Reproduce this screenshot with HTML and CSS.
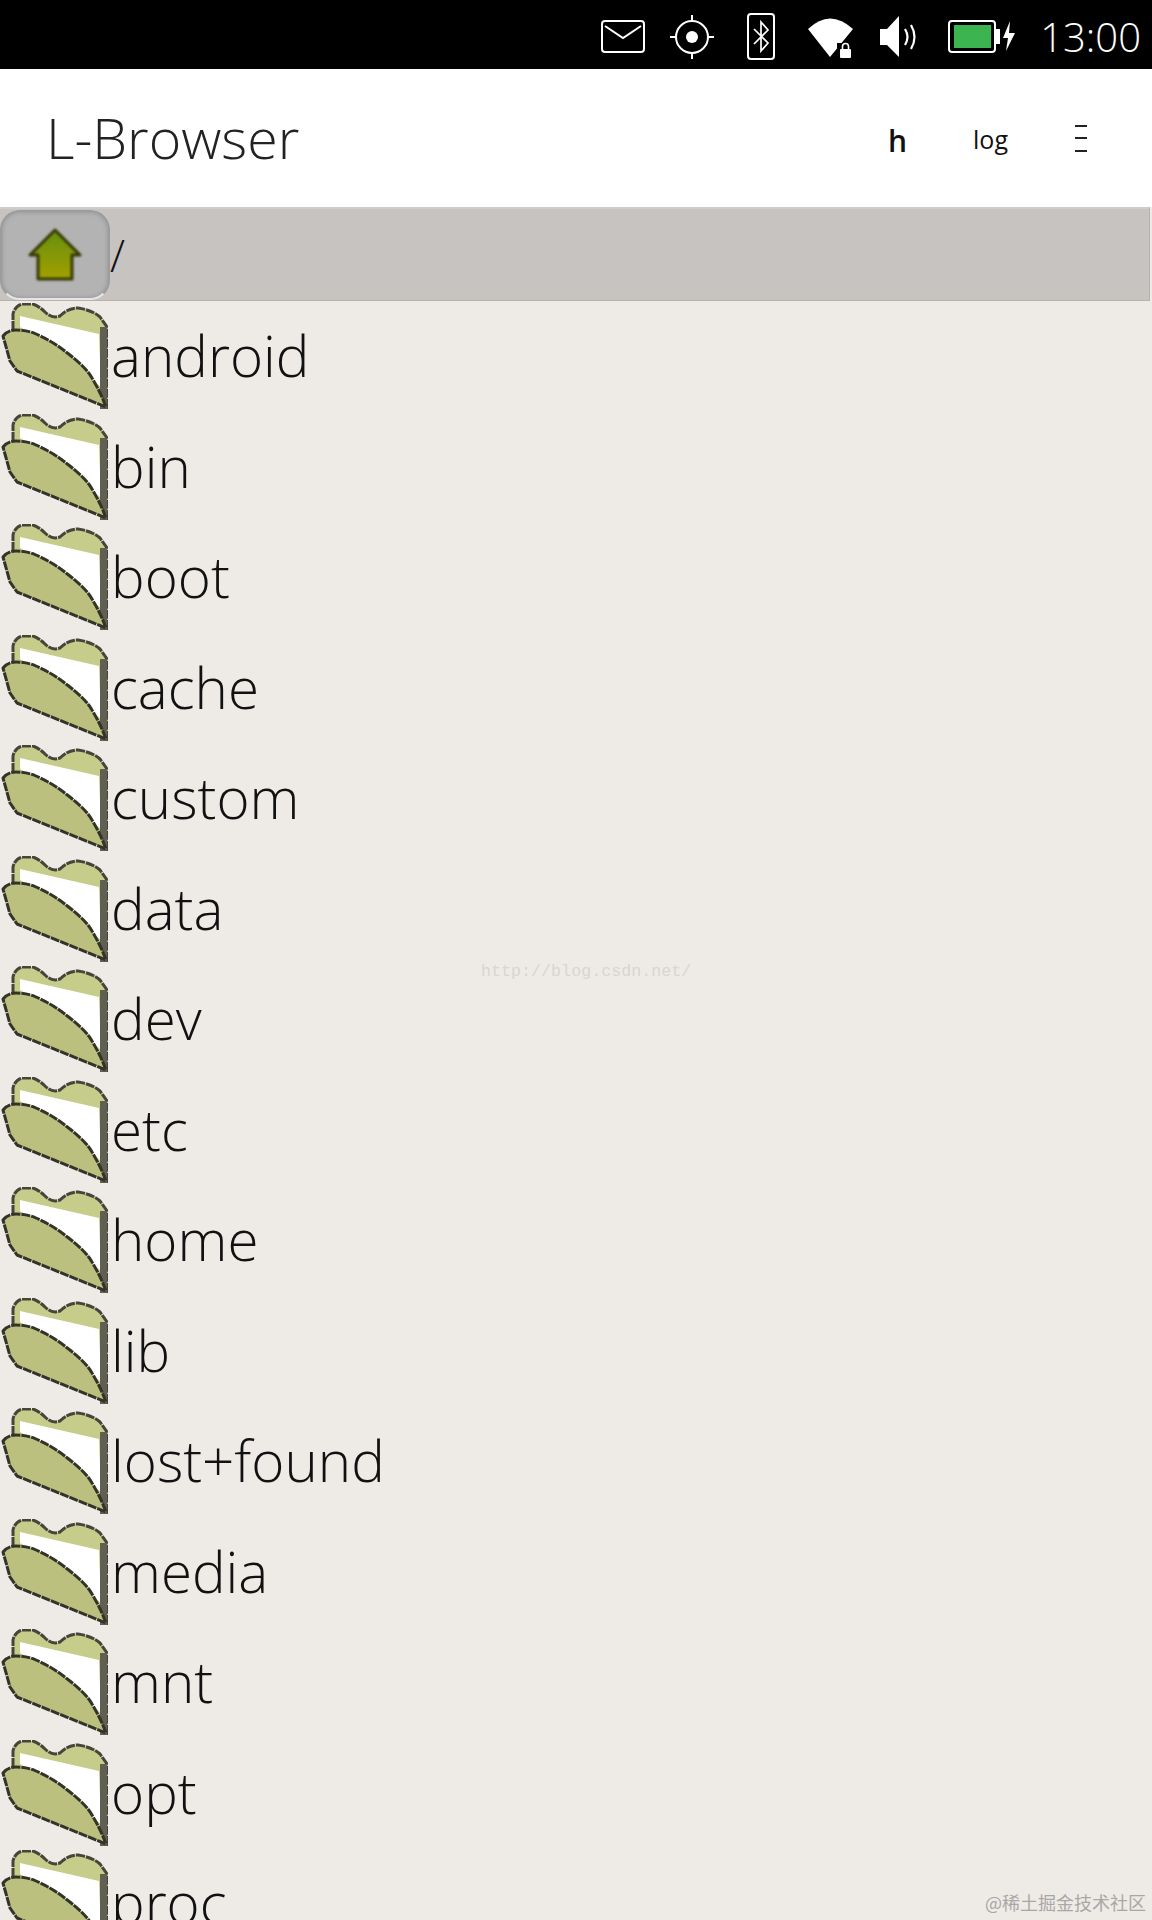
FILE: index.html
```html
<!DOCTYPE html>
<html lang="en">
<head>
<meta charset="utf-8">
<title>L-Browser</title>
<link rel="stylesheet" href="styles.css">
</head>
<body>
<svg class="defs" width="0" height="0" aria-hidden="true">
  <defs>
    <symbol id="folder" viewBox="0 0 108 106">
      <path d="M13 27 L13 11 Q15 3 22 1 L33 1 Q39 3 45 9 Q52 16 60 13 Q68 5 78 5 Q92 7 100 14 L107 24 L107 104 L60 60 L13 27Z" fill="#c6cc8a" stroke="#45453a" stroke-width="3" stroke-dasharray="9 1"/>
      <path d="M20 13 L99 31 L101 84 L60 50 L20 24Z" fill="#fff"/>
      <rect x="100" y="24" width="7" height="82" fill="#5f6052"/>
      <path d="M3 33 Q8 27 16 27 Q27 27 36 31 Q54 39 66 49 Q86 64 92 75 Q101 90 106 104 L17 68 L10 58Z" fill="#bcc07f" stroke="#33332a" stroke-width="3" stroke-dasharray="9 1" stroke-linejoin="round"/>
    </symbol>
    <linearGradient id="arrowfill" x1="0" y1="0" x2="0" y2="1">
      <stop offset="0" stop-color="#668f0e"/>
      <stop offset="1" stop-color="#a3a000"/>
    </linearGradient>
  </defs>
</svg>

<header class="status">
  <svg class="ic ic-mail" width="44" height="33" viewBox="0 0 44 33"><rect x="1" y="1" width="42" height="31" rx="3" fill="none" stroke="#fff" stroke-width="2"/><path d="M4 6 L22 18 L40 6" fill="none" stroke="#fff" stroke-width="2"/></svg>
  <svg class="ic ic-target" width="44" height="44" viewBox="0 0 44 44"><circle cx="22" cy="22" r="16" fill="none" stroke="#fff" stroke-width="2"/><circle cx="22" cy="22" r="6" fill="#fff"/><path d="M22 0V6M22 38V44M0 22H6M38 22H44" stroke="#fff" stroke-width="2"/></svg>
  <svg class="ic ic-bt" width="28" height="47" viewBox="0 0 28 47"><rect x="1" y="1" width="26" height="45" rx="3" fill="none" stroke="#fff" stroke-width="2"/><path d="M7 16 L21 30 L14 38 V9 L21 17 L7 31" fill="none" stroke="#fff" stroke-width="1.7"/></svg>
  <svg class="ic ic-wifi" width="45" height="42" viewBox="0 0 45 42"><path d="M0 13 Q22 -8 45 13 L22 41Z" fill="#fff"/><rect x="29" y="27" width="16" height="15" fill="#000"/><rect x="32" y="33" width="11" height="9" rx="1" fill="#fff"/><path d="M34.5 33V30.500a3 3 0 0 1 6 0V33" fill="none" stroke="#fff" stroke-width="1.600"/></svg>
  <svg class="ic ic-sound" width="39" height="42" viewBox="0 0 39 42"><path d="M0 13 H7 L19 0 V41 L7 29 H0Z" fill="#fff"/><path d="M25 13 Q30 21 25 29M31 9 Q38 21 31 33" fill="none" stroke="#fff" stroke-width="2.200"/></svg>
  <svg class="ic ic-battery" width="67" height="33" viewBox="0 0 67 33"><rect x="1" y="1" width="46" height="31" rx="3" fill="none" stroke="#fff" stroke-width="2"/><rect x="6" y="5" width="37" height="23" fill="#3cb44f"/><rect x="48" y="9" width="4" height="15" fill="#fff"/><path d="M62 1 L55 18 H60 L58 31 L67 13 H61 Z" fill="#fff"/></svg>
  <span class="clock">13:00</span>
</header>

<nav class="appbar">
  <h1 class="title">L-Browser</h1>
  <div class="actions">
    <span class="action action-h">h</span>
    <span class="action action-log">log</span>
    <span class="overflow"><i></i><i></i><i></i></span>
  </div>
</nav>

<section class="pathbar">
  <button class="upbtn" type="button" aria-label="Up">
    <svg class="uparrow" width="54" height="54" viewBox="0 0 54 54"><path d="M27 2 L52 27 H44 V51 H10 V27 H2Z" fill="url(#arrowfill)" stroke="#353a04" stroke-width="3" stroke-linejoin="round"/></svg>
  </button>
  <span class="path">/</span>
</section>

<ul class="list">
  <li class="row"><svg class="folder"><use href="#folder"/></svg><span class="name">android</span></li>
  <li class="row"><svg class="folder"><use href="#folder"/></svg><span class="name">bin</span></li>
  <li class="row"><svg class="folder"><use href="#folder"/></svg><span class="name">boot</span></li>
  <li class="row"><svg class="folder"><use href="#folder"/></svg><span class="name">cache</span></li>
  <li class="row"><svg class="folder"><use href="#folder"/></svg><span class="name">custom</span></li>
  <li class="row"><svg class="folder"><use href="#folder"/></svg><span class="name">data</span></li>
  <li class="row"><svg class="folder"><use href="#folder"/></svg><span class="name">dev</span></li>
  <li class="row"><svg class="folder"><use href="#folder"/></svg><span class="name">etc</span></li>
  <li class="row"><svg class="folder"><use href="#folder"/></svg><span class="name">home</span></li>
  <li class="row"><svg class="folder"><use href="#folder"/></svg><span class="name">lib</span></li>
  <li class="row"><svg class="folder"><use href="#folder"/></svg><span class="name">lost+found</span></li>
  <li class="row"><svg class="folder"><use href="#folder"/></svg><span class="name">media</span></li>
  <li class="row"><svg class="folder"><use href="#folder"/></svg><span class="name">mnt</span></li>
  <li class="row"><svg class="folder"><use href="#folder"/></svg><span class="name">opt</span></li>
  <li class="row"><svg class="folder"><use href="#folder"/></svg><span class="name">proc</span></li>
</ul>

<div class="mark-csdn">http://blog.csdn.net/</div>
<div class="mark-juejin">@稀土掘金技术社区</div>
</body>
</html>
```

FILE: styles.css
```css
* { box-sizing: border-box; }
html, body { margin: 0; padding: 0; }
body {
  position: relative;
  width: 1152px;
  height: 1920px;
  overflow: hidden;
  background: #eeebe7;
  font-family: "Open Sans", "Noto Sans", sans-serif;
  color: #111;
}
.defs { position: absolute; }

.status {
  height: 69px;
  background: #000;
  display: flex;
  align-items: center;
  justify-content: flex-end;
  padding-right: 11px;
  padding-top: 4px;
}
.ic { flex: none; display: block; }
.ic-target { margin-left: 25px; }
.ic-bt { margin-left: 33px; }
.ic-wifi { margin-left: 33px; }
.ic-sound { margin-left: 27px; }
.ic-battery { margin-left: 29px; }
.clock {
  margin-left: 25px;
  color: #fff;
  font-size: 40px;
  font-weight: 300;
  line-height: 60px;
}

.appbar {
  height: 138px;
  background: #fff;
  display: flex;
  align-items: center;
  justify-content: space-between;
  padding-left: 46px;
}
.title {
  margin: 0;
  font-size: 55.500px;
  font-weight: 300;
  line-height: 70px;
  color: #222;
}
.actions { display: flex; align-items: center; }
.action { font-size: 25px; font-weight: 500; color: #111; line-height: 40px; margin-top: 2px; }
.action-h { font-size: 30px; font-weight: 600; margin-top: 5px; }
.action-log { margin-left: 66px; }
.overflow {
  margin: 0 65px 0 67px;
  display: flex;
  flex-direction: column;
  gap: 10.500px;
}
.overflow i { display: block; width: 12px; height: 2px; background: #222; }

.pathbar {
  height: 94px;
  margin-right: 2px;
  background: #c7c3c0;
  border-top: 2px solid #cfcdca;
  border-bottom: 1px solid #b4b1ae;
  border-right: 1px solid #b4b1ae;
  display: flex;
  align-items: center;
}
.upbtn {
  width: 110px;
  height: 90px;
  padding: 0;
  flex: none;
  display: flex;
  align-items: center;
  justify-content: center;
  background: #b4b3b3;
  border: 2px solid #9c9c9c;
  border-bottom-color: #e6e6e6;
  border-radius: 20px;
  box-shadow: inset 0 0 4px #8f8f8f;
}
.uparrow { filter: blur(0.8px); }
.path { font-size: 44px; font-weight: 300; line-height: 70px; color: #111; }

.list { margin: 0; padding: 0; list-style: none; }
.row {
  height: 110.500px;
  display: flex;
  align-items: flex-start;
}
.folder { flex: none; width: 108px; height: 106px; margin-top: 2px; filter: blur(0.6px); }
.name {
  margin-left: 3px;
  font-size: 56.500px;
  font-weight: 300;
  line-height: 80px;
  margin-top: 15px;
  color: #111;
}

.mark-csdn {
  position: absolute;
  left: 481px;
  top: 962px;
  font-family: "Liberation Mono", monospace;
  font-size: 16.700px;
  line-height: 20px;
  color: #d9d5d1;
}
.mark-juejin {
  position: absolute;
  right: 6px;
  top: 1890px;
  font-family: "Noto Sans CJK SC", sans-serif;
  font-size: 18px;
  line-height: 24px;
  color: #a9a7a5;
}
```
